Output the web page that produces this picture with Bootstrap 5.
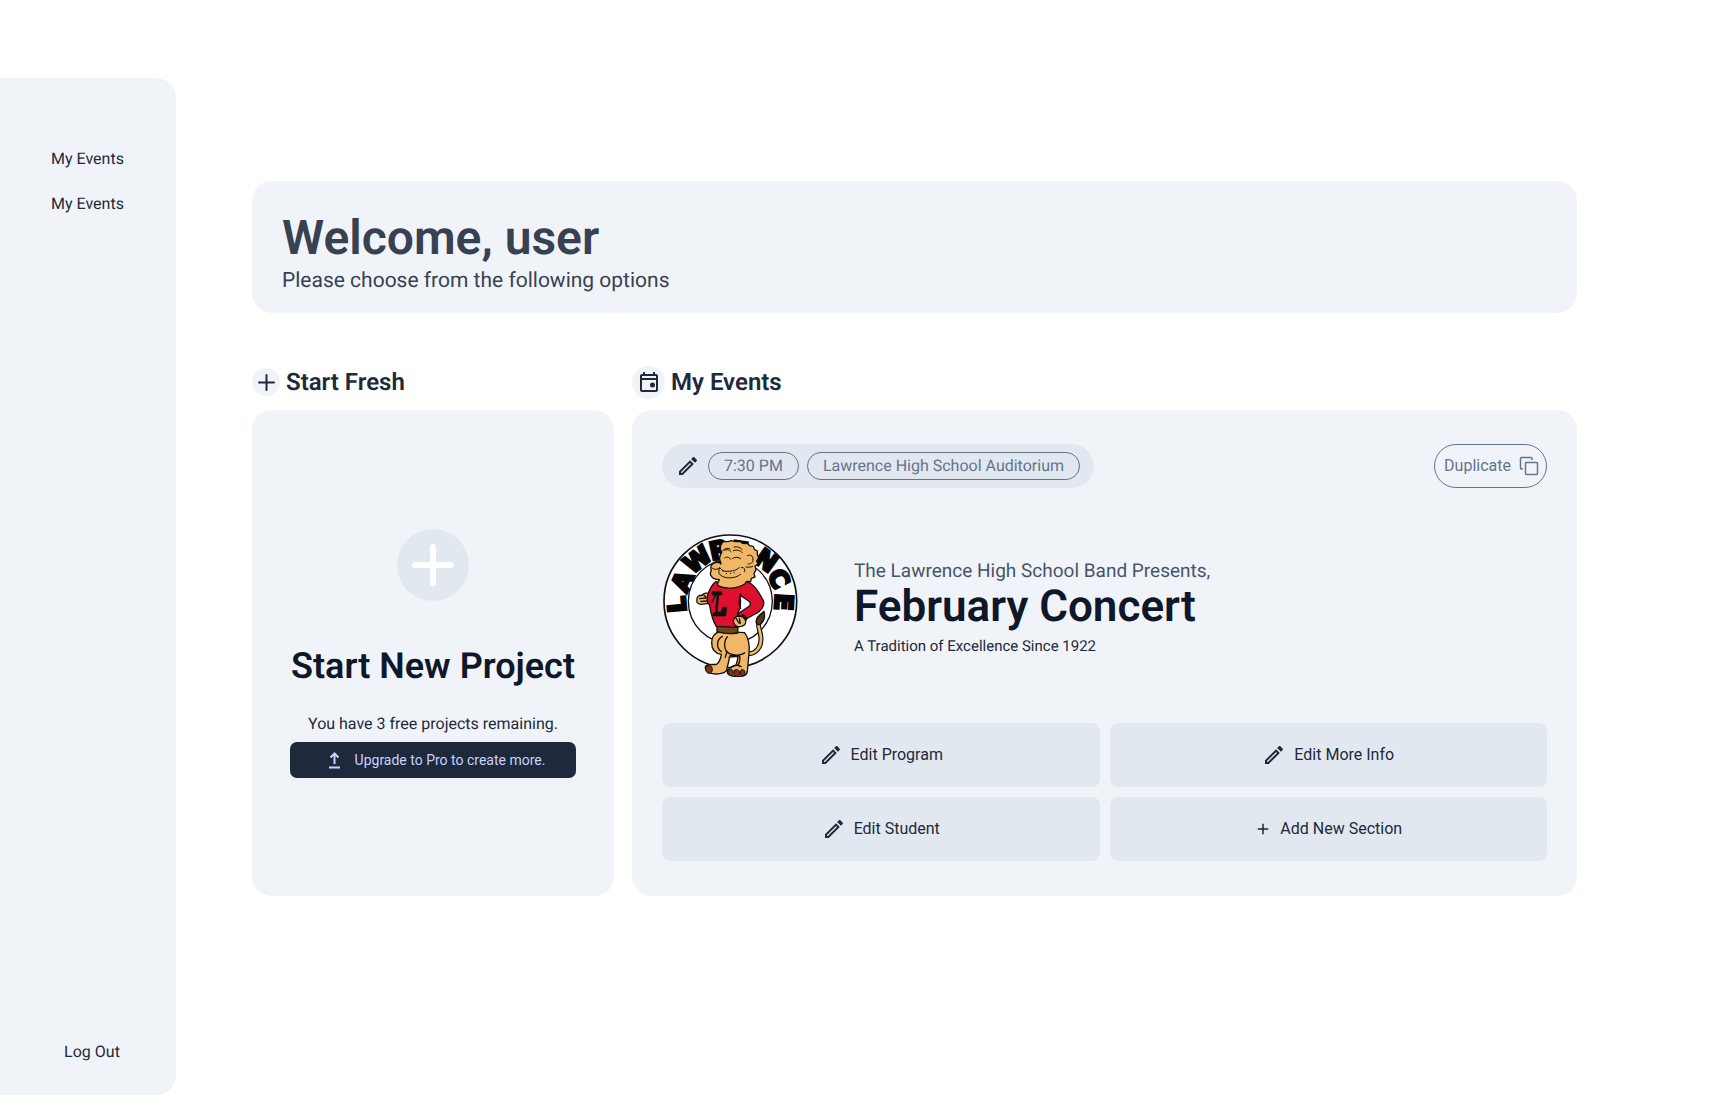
<!DOCTYPE html>
<html lang="en">
<head>
<meta charset="utf-8">
<meta name="viewport" content="width=device-width, initial-scale=1">
<title>My Events</title>
<link href="https://cdn.jsdelivr.net/npm/bootstrap@5.3.0/dist/css/bootstrap.min.css" rel="stylesheet">
<style>
  body { font-family: Roboto, "Liberation Sans", sans-serif; color: #1e293b; background: #fff; text-rendering: geometricPrecision; }
  a { color: inherit; text-decoration: none; }
  .side { width: 176px; margin: 78px 0 22px; padding: 69px 0 31px; min-height: calc(100vh - 100px); background: #f0f4f9; border-radius: 0 20px 20px 0; }
  .side-links { gap: 21px; padding-right: 1px; }
  .logout { margin-left: 8px; }
  main { padding: 181px 151px 60px 76px; min-width: 0; }
  .panel { background: #f0f4f9; border-radius: 20px; }
  .welcome { padding: 29px 30px 18px; margin-bottom: 53px; color: #374151; }
  .welcome h1 { font-size: 48px; line-height: 56px; font-weight: 600; margin-bottom: 1px; }
  .welcome p { font-size: 21px; line-height: 28px; }
  .board { gap: 18px; }
  .col-start { width: 362px; }
  .sect-head { height: 32px; margin-bottom: 12px; gap: 6px; }
  .sect-head h2 { font-size: 24px; line-height: 32px; font-weight: 600; margin: 0; }
  .dot { width: 28px; height: 28px; border-radius: 50%; background: #f0f4f9; }
  .dot-lg { width: 33px; height: 33px; }
  .start { padding: 119px 38px 60px; }
  .start h3 { font-size: 36px; line-height: 44px; font-weight: 600; color: #0f172a; margin: 43px 0 24px; white-space: nowrap; }
  .start p { margin-bottom: 6px; }
  .big-plus { width: 72px; height: 72px; border-radius: 50%; background: #e2e8f0; border: 0; padding: 0; }
  .upgrade, .upgrade:hover { height: 36px; background: #1e293b; color: #c7d2fe; border: 0; border-radius: 7px; font-size: 14px; gap: 6px; padding: 0 14px 0 20px; }
  .event { padding: 34px 30px 35px; }
  .meta-bar { height: 44px; padding: 0 14px; gap: 8px; border-radius: 22px; background: #e2e8f0; }
  .chip { height: 28px; line-height: 26px; padding: 0 15px; border: 1px solid #64748b; border-radius: 14px; color: #64748b; }
  .dup { height: 44px; padding: 0 7px 0 9px; gap: 8px; border: 1px solid #64748b; border-radius: 22px; color: #64748b; }
  .show { gap: 56px; margin: 46px 0 44px; }
  .show h3 { font-size: 44px; line-height: 46px; font-weight: 600; color: #0f172a; margin-bottom: 5px; }
  .show-text { padding-top: 3px; }
  .presents { font-size: 19px; line-height: 24px; color: #475569; }
  .motto { font-size: 15px; line-height: 24px; }
  .tiles { gap: 10px; }
  .tiles > div { gap: 10px; }
  .tile, .tile:hover { height: 64px; gap: 8px; background: #e2e8f0; border: 0; border-radius: 8px; color: #1e293b; }
</style>
<script src="https://cdn.jsdelivr.net/npm/bootstrap@5.3.0/dist/js/bootstrap.bundle.min.js"></script>
</head>
<body>
<svg width="0" height="0" class="position-absolute" aria-hidden="true">
  <symbol id="pencil" viewBox="0 0 24 24"><path fill="currentColor" d="M14.06 9.02l.92.92L5.92 19H5v-.92l9.06-9.06M17.66 3c-.25 0-.51.1-.7.29l-1.83 1.83 3.75 3.75 1.83-1.83c.39-.39.39-1.02 0-1.41l-2.34-2.34c-.2-.2-.45-.29-.71-.29zm-3.6 3.19L3 17.25V21h3.75L17.81 9.94l-3.75-3.75z"/></symbol>
  <symbol id="plus" viewBox="0 0 24 24"><path fill="currentColor" d="M19 13h-6v6h-2v-6H5v-2h6V5h2v6h6z"/></symbol>
</svg>
<div class="d-flex">
  <nav class="side d-flex flex-column justify-content-between align-items-center flex-shrink-0" aria-label="Main">
    <div class="side-links d-flex flex-column align-items-center w-100">
      <a href="#">My Events</a>
      <a href="#">My Events</a>
    </div>
    <a class="logout" href="#">Log Out</a>
  </nav>
  <main class="flex-grow-1">
    <header class="panel welcome">
      <h1>Welcome, user</h1>
      <p class="mb-0">Please choose from the following options</p>
    </header>
    <div class="board d-flex">
      <section class="col-start d-flex flex-column flex-shrink-0">
        <div class="sect-head d-flex align-items-center">
          <span class="dot d-flex align-items-center justify-content-center"><svg width="28" height="28" fill="none" stroke="currentColor" stroke-width="2" stroke-linecap="round"><path d="M14.500 7v15M7 14.500h15"/></svg></span>
          <h2>Start Fresh</h2>
        </div>
        <div class="panel start flex-grow-1 text-center">
          <button type="button" class="big-plus" aria-label="New project"><svg width="72" height="72" stroke="#fff" stroke-width="6" stroke-linecap="round"><path d="M36 18v36M18 36h36"/></svg></button>
          <h3>Start New Project</h3>
          <p>You have 3 free projects remaining.</p>
          <button type="button" class="btn upgrade d-flex align-items-center justify-content-center w-100"><svg width="14" height="18" viewBox="0 0 14 18" fill="none" stroke="currentColor" stroke-width="2"><path d="M2 16.500h11M7.500 13V3M3.500 6.500l4-4 4 4"/></svg><span class="ps-2">Upgrade to Pro to create more.</span></button>
        </div>
      </section>
      <section class="flex-grow-1">
        <div class="sect-head d-flex align-items-center">
          <span class="dot dot-lg d-flex align-items-center justify-content-center"><svg width="24" height="24" viewBox="0 0 24 24" fill="currentColor"><path d="M19 4h-1V2h-2v2H8V2H6v2H5c-1.100 0-2 .9-2 2v14c0 1.100.9 2 2 2h14c1.100 0 2-.9 2-2V6c0-1.100-.9-2-2-2zm0 16H5V10h14v10zm0-12H5V6h14v2z"/><circle cx="15.500" cy="15" r="2.500"/></svg></span>
          <h2>My Events</h2>
        </div>
        <div class="panel event">
          <div class="d-flex justify-content-between">
            <div class="meta-bar d-flex align-items-center">
              <svg width="24" height="24"><use href="#pencil"/></svg>
              <span class="chip">7:30 PM</span>
              <span class="chip">Lawrence High School Auditorium</span>
            </div>
            <button type="button" class="btn dup d-flex align-items-center">Duplicate <svg width="20" height="20" fill="none" stroke="currentColor" stroke-width="1.500"><path d="M4 13H2.500a1 1 0 0 1-1-1V2.500a1 1 0 0 1 1-1H12a1 1 0 0 1 1 1V4"/><rect x="6.500" y="6.500" width="12" height="12" rx="1"/></svg></button>
          </div>
          <div class="show d-flex align-items-center">
            <svg width="136" height="145" viewBox="38 38 408 435" role="img" aria-label="Lawrence lion mascot">
              <circle cx="243" cy="240" r="199" fill="#fff" stroke="#111" stroke-width="5"/>
              <circle cx="243" cy="240" r="126" fill="#fff" stroke="#111" stroke-width="4"/>
              <g font-family="DejaVu Sans" font-weight="700" font-size="74" text-anchor="middle" fill="#050505" stroke="#050505" stroke-width="8">
                <text transform="translate(109 248) rotate(-95)">L</text>
                <text transform="translate(123 190) rotate(-66)">A</text>
                <text transform="translate(160 135) rotate(-38)">W</text>
                <text transform="translate(214 111) rotate(-12)">R</text>
                <text transform="translate(268 114) rotate(8)">E</text>
                <text transform="translate(335 138) rotate(36)">N</text>
                <text transform="translate(365 184) rotate(63)">C</text>
                <text transform="translate(377 241) rotate(93)">E</text>
              </g>
              <g stroke="#111" stroke-width="4" stroke-linejoin="round" stroke-linecap="round">
                <path d="M298 397c22 0 38-20 37-47-1-20-10-30-7-48" fill="none" stroke-width="15"/>
                <path d="M298 397c22 0 38-20 37-47-1-20-10-30-7-48" fill="none" stroke="#f0b866" stroke-width="8"/>
                <path d="M344 270c4 16-1 31-12 40-8 1-13-3-11-13 2-12 13-17 23-27z" fill="#5b3415"/>
                <path d="M213 330c-16 4-26 17-26 34 0 19 11 32 29 35-2 14-6 24-14 30-11 2-31-3-34 8-2 10 8 18 21 20 17 3 39-1 43-11 2-14 8-27 8-39l26-2c-1 9-2 18-6 26-10 5-26 8-26 20 0 11 17 15 36 14 13 0 23-5 24-14l5-56c3-21-2-47-13-61z" fill="#f0b866"/>
                <path d="M234 346c-13 18-10 44 7 51 20 8 39 3 45-3M219 345c-18 9-19 35-3 46M242 403h27M233 390l-5 18M270 400c3 12 2 21-3 30M246 437c8-6 20-6 29-1" fill="none"/>
                <path d="M173 434c8-4 15 0 16 8 1 9-4 15-11 14-9-2-13-16-5-22zM239 445c6-4 13 0 13 8s-6 12-12 8c-5-3-6-12-1-16zM257 446c6-4 14 0 14 9s-7 13-13 9c-5-4-6-14-1-18zM276 446c6-3 12 1 11 9s-7 11-12 7c-4-4-4-13 1-16z" fill="#843313" stroke-width="3"/>
                <path d="M203 314l63 2-1 19c-20 3-42 2-62-4z" fill="#704713"/>
                <path d="M178 216c-10-2-17 0-19 6-10-1-17 4-16 12-3 8 2 14 11 15l24-3z" fill="#f0b866"/>
                <path d="M151 232l19-2M154 240l19-1M164 222l6 6" fill="none"/>
                <path d="M199 181c27 10 58 8 84-3 28 5 43 29 59 60 4 12-3 25-14 34l-43 24-21-15 9-16c-6 11-11 21-10 34l-3 19-59-3c-12-18-16-37-20-63-8-7-9-18-6-30 6-20 12-32 24-41z" fill="#df102d"/>
                <path d="M272 227c4 17 1 33-7 51l31-21c10-5 9-13 2-18l-27-18z" fill="#fff"/>
                <path d="M274 218c-5 15-6 32 0 44M187 243c5-7 9-12 11-23" fill="none"/>
                <path d="M282 279l11 12-6 10-16-14z" fill="#191919"/>
                <path d="M269 284c-12 1-19 9-16 20 4 11 15 15 26 10 10-3 13-12 8-20-4-7-10-10-18-10z" fill="#f0b866"/>
                <path d="M260 291l9 14M270 291l3 15" fill="none"/>
                <path d="M189 211h28v10h-9l-4 51h12l3-14h13l-3 26h-38v-10h7l5-53h-14z" fill="#111" stroke-width="2"/>
                <path d="M216 68l6-8 14 1 10-3 12 3 14-1 7 6 16 1 6 6 11 2 3 9 9 5 0 11 4 9-6 10 4 9-9 7 3 10-6 11 3 11-11 4-2 10-12-1-6 8c-21 14-57 17-81 5 0-10 1-12 5-18-13 0-19-3-23-9-5-6-5-12-1-18-4-10 0-19 9-23 6-3 14-2 20 1-7-13-4-24 2-32-5-9-4-20-1-26z" fill="#f0b866"/>
                <path d="M188 140c7 6 17 5 23-1 6 7 13 13 24 11 15-1 26-2 35-12M211 139c-4 8-4 17 2 22 15 12 43 12 61-2M225 87c7-4 14-2 20 4M252 88c11-4 20-1 27 6M226 110c8-5 13-3 18 4M250 111c9-5 17-4 24 1M217 91c8-9 16-13 25-8M254 77c11-2 18 1 24 7M294 103c9-5 17 1 17 10 1 11-8 16-15 15M276 139c8-3 13 5 9 12M290 137c8 1 13 1 20-2M220 149h1M231 157h1M243 156h1M254 154h1" fill="none" stroke-width="3"/>
                <path d="M197 119c8-4 16 2 17 9" fill="none"/>
              </g>
            </svg>
            <div class="show-text">
              <div class="presents">The Lawrence High School Band Presents,</div>
              <h3>February Concert</h3>
              <div class="motto">A Tradition of Excellence Since 1922</div>
            </div>
          </div>
          <div class="tiles d-flex">
            <div class="d-flex flex-column w-50">
              <button type="button" class="btn tile d-flex align-items-center justify-content-center"><svg width="24" height="24"><use href="#pencil"/></svg>Edit Program</button>
              <button type="button" class="btn tile d-flex align-items-center justify-content-center"><svg width="24" height="24"><use href="#pencil"/></svg>Edit Student</button>
            </div>
            <div class="d-flex flex-column w-50">
              <button type="button" class="btn tile d-flex align-items-center justify-content-center"><svg width="24" height="24"><use href="#pencil"/></svg>Edit More Info</button>
              <button type="button" class="btn tile d-flex align-items-center justify-content-center"><svg width="18" height="18"><use href="#plus"/></svg>Add New Section</button>
            </div>
          </div>
        </div>
      </section>
    </div>
  </main>
</div>
</body>
</html>
